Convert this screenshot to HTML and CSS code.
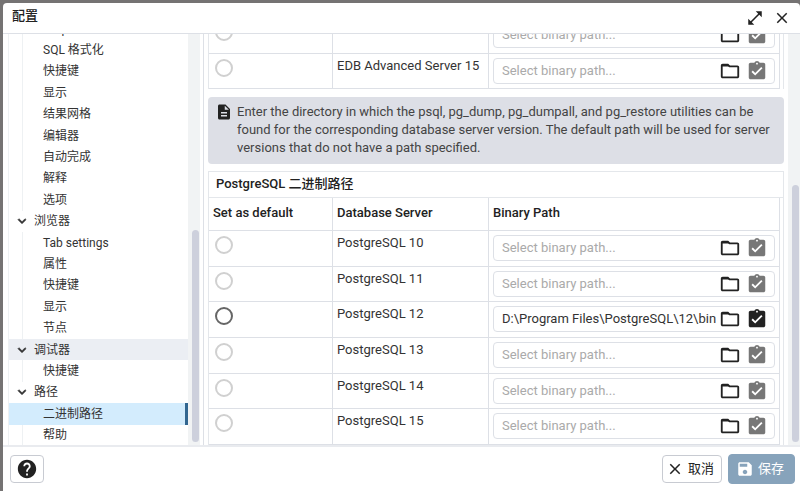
FILE: index.html
```html
<!DOCTYPE html>
<html lang="zh-CN">
<head>
  <meta charset="UTF-8">
  <title>配置</title>
  <link rel="stylesheet" href="styles.css">
</head>
<body>

<svg class="sprite" aria-hidden="true">
  <symbol id="i-folder" viewBox="0 0 24 24"><path d="M9.17 6l2 2H20v10H4V6h5.17M10 4H4c-1.1 0-1.99.9-1.99 2L2 18c0 1.1.9 2 2 2h16c1.1 0 2-.9 2-2V8c0-1.1-.9-2-2-2h-8l-2-2z"/><path d="M3 5h7l2 2H3z"/></symbol>
  <symbol id="i-check" viewBox="0 0 24 24"><path d="M19 3h-4.18C14.4 1.84 13.3 1 12 1c-1.3 0-2.4.84-2.82 2H5c-1.1 0-2 .9-2 2v14c0 1.1.9 2 2 2h14c1.1 0 2-.9 2-2V5c0-1.1-.9-2-2-2zm-7 0c.55 0 1 .45 1 1s-.45 1-1 1-1-.45-1-1 .45-1 1-1zm-2 14l-4-4 1.41-1.41L10 14.17l6.59-6.59L18 9l-8 8z"/></symbol>
  <symbol id="i-close" viewBox="0 0 24 24"><path d="M19 6.41L17.59 5 12 10.59 6.41 5 5 6.41 10.59 12 5 17.59 6.41 19 12 13.41 17.59 19 19 17.59 13.41 12z"/></symbol>
  <symbol id="i-expand" viewBox="0 0 24 24"><path d="M21 11V3h-8l3.29 3.29-10 10L3 13v8h8l-3.29-3.29 10-10z"/></symbol>
  <symbol id="i-chevron" viewBox="0 0 24 24"><path d="M7.41 8.59L12 13.17l4.59-4.58L18 10l-6 6-6-6z" stroke="currentColor"/></symbol>
  <symbol id="i-note" viewBox="0 0 24 24"><path d="M14 2H6c-1.1 0-1.99.9-1.99 2L4 20c0 1.1.89 2 1.99 2H18c1.1 0 2-.9 2-2V8l-6-6zm2 16H8v-2h8v2zm0-4H8v-2h8v2zm-3-5V3.5L18.5 9H13z"/></symbol>
  <symbol id="i-help" viewBox="0 0 24 24"><path d="M12 2C6.48 2 2 6.48 2 12s4.48 10 10 10 10-4.48 10-10S17.52 2 12 2zm1 17h-2v-2h2v2zm2.07-7.75l-.9.92C13.45 12.9 13 13.5 13 15h-2v-.5c0-1.1.45-2.1 1.17-2.83l1.24-1.26c.37-.36.59-.86.59-1.41 0-1.1-.9-2-2-2s-2 .9-2 2H8c0-2.21 1.79-4 4-4s4 1.79 4 4c0 .88-.36 1.68-.93 2.25z"/></symbol>
  <symbol id="i-save" viewBox="0 0 24 24"><path d="M17 3H5c-1.11 0-2 .9-2 2v14c0 1.1.89 2 2 2h14c1.1 0 2-.9 2-2V7l-4-4zm-5 16c-1.66 0-3-1.34-3-3s1.34-3 3-3 3 1.34 3 3-1.34 3-3 3zm3-10H5V5h10v4z"/></symbol>
</svg>

<div class="dialog">
  <header class="dialog-header">
    <h1>配置</h1>
    <button class="icon-btn" aria-label="最大化"><svg class="icon-md"><use href="#i-expand"/></svg></button>
    <button class="icon-btn" aria-label="关闭"><svg class="icon-md"><use href="#i-close"/></svg></button>
  </header>

  <div class="dialog-body">
    <aside class="sidebar">
      <ul class="tree">
        <li class="leaf">Graph Visualiser</li>
        <li class="leaf">SQL 格式化</li>
        <li class="leaf">快捷键</li>
        <li class="leaf">显示</li>
        <li class="leaf">结果网格</li>
        <li class="leaf">编辑器</li>
        <li class="leaf">自动完成</li>
        <li class="leaf">解释</li>
        <li class="leaf">选项</li>
        <li class="group"><svg class="icon-sm"><use href="#i-chevron"/></svg>浏览器</li>
        <li class="leaf">Tab settings</li>
        <li class="leaf">属性</li>
        <li class="leaf">快捷键</li>
        <li class="leaf">显示</li>
        <li class="leaf">节点</li>
        <li class="group focused"><svg class="icon-sm"><use href="#i-chevron"/></svg>调试器</li>
        <li class="leaf">快捷键</li>
        <li class="group"><svg class="icon-sm"><use href="#i-chevron"/></svg>路径</li>
        <li class="leaf selected">二进制路径</li>
        <li class="leaf">帮助</li>
      </ul>
      <div class="scrollbar"><div class="thumb thumb-tree"></div></div>
    </aside>

    <main class="content">
      <div class="panels">
        <section class="panel">
          <table class="paths paths-edb">
            <colgroup><col class="col-default"><col class="col-server"><col></colgroup>
            <tbody>
              <tr>
                <td><input type="radio" name="edb" aria-label="EDB Advanced Server 14" disabled></td>
                <td></td>
                <td><div class="path-field"><input type="text" placeholder="Select binary path..." aria-label="EDB Advanced Server 14 path"><button aria-label="Select"><svg class="icon-lg"><use href="#i-folder"/></svg></button><button aria-label="Validate" disabled><svg class="icon-lg"><use href="#i-check"/></svg></button></div></td>
              </tr>
              <tr>
                <td><input type="radio" name="edb" aria-label="EDB Advanced Server 15" disabled></td>
                <td>EDB Advanced Server 15</td>
                <td><div class="path-field"><input type="text" placeholder="Select binary path..." aria-label="EDB Advanced Server 15 path"><button aria-label="Select"><svg class="icon-lg"><use href="#i-folder"/></svg></button><button aria-label="Validate" disabled><svg class="icon-lg"><use href="#i-check"/></svg></button></div></td>
              </tr>
            </tbody>
          </table>
        </section>

        <div class="note">
          <svg class="icon-md"><use href="#i-note"/></svg>
          <p>Enter the directory in which the psql, pg_dump, pg_dumpall, and pg_restore utilities can be found for the corresponding database server version. The default path will be used for server versions that do not have a path specified.</p>
        </div>

        <section class="panel">
          <h2>PostgreSQL 二进制路径</h2>
          <table class="paths paths-pg">
            <colgroup><col class="col-default"><col class="col-server"><col></colgroup>
            <thead>
              <tr><th>Set as default</th><th>Database Server</th><th>Binary Path</th></tr>
            </thead>
            <tbody>
              <tr>
                <td><input type="radio" name="pg" aria-label="PostgreSQL 10" disabled></td>
                <td>PostgreSQL 10</td>
                <td><div class="path-field"><input type="text" placeholder="Select binary path..." aria-label="PostgreSQL 10 path"><button aria-label="Select"><svg class="icon-lg"><use href="#i-folder"/></svg></button><button aria-label="Validate" disabled><svg class="icon-lg"><use href="#i-check"/></svg></button></div></td>
              </tr>
              <tr>
                <td><input type="radio" name="pg" aria-label="PostgreSQL 11" disabled></td>
                <td>PostgreSQL 11</td>
                <td><div class="path-field"><input type="text" placeholder="Select binary path..." aria-label="PostgreSQL 11 path"><button aria-label="Select"><svg class="icon-lg"><use href="#i-folder"/></svg></button><button aria-label="Validate" disabled><svg class="icon-lg"><use href="#i-check"/></svg></button></div></td>
              </tr>
              <tr>
                <td><input type="radio" name="pg" aria-label="PostgreSQL 12"></td>
                <td>PostgreSQL 12</td>
                <td><div class="path-field"><input type="text" value="D:\Program Files\PostgreSQL\12\bin" aria-label="PostgreSQL 12 path"><button aria-label="Select"><svg class="icon-lg"><use href="#i-folder"/></svg></button><button aria-label="Validate"><svg class="icon-lg"><use href="#i-check"/></svg></button></div></td>
              </tr>
              <tr>
                <td><input type="radio" name="pg" aria-label="PostgreSQL 13" disabled></td>
                <td>PostgreSQL 13</td>
                <td><div class="path-field"><input type="text" placeholder="Select binary path..." aria-label="PostgreSQL 13 path"><button aria-label="Select"><svg class="icon-lg"><use href="#i-folder"/></svg></button><button aria-label="Validate" disabled><svg class="icon-lg"><use href="#i-check"/></svg></button></div></td>
              </tr>
              <tr>
                <td><input type="radio" name="pg" aria-label="PostgreSQL 14" disabled></td>
                <td>PostgreSQL 14</td>
                <td><div class="path-field"><input type="text" placeholder="Select binary path..." aria-label="PostgreSQL 14 path"><button aria-label="Select"><svg class="icon-lg"><use href="#i-folder"/></svg></button><button aria-label="Validate" disabled><svg class="icon-lg"><use href="#i-check"/></svg></button></div></td>
              </tr>
              <tr>
                <td><input type="radio" name="pg" aria-label="PostgreSQL 15" disabled></td>
                <td>PostgreSQL 15</td>
                <td><div class="path-field"><input type="text" placeholder="Select binary path..." aria-label="PostgreSQL 15 path"><button aria-label="Select"><svg class="icon-lg"><use href="#i-folder"/></svg></button><button aria-label="Validate" disabled><svg class="icon-lg"><use href="#i-check"/></svg></button></div></td>
              </tr>
            </tbody>
          </table>
        </section>
      </div>
      <div class="scrollbar"><div class="thumb thumb-main"></div></div>
    </main>
  </div>

  <footer class="dialog-footer">
    <button class="btn btn-help" aria-label="帮助"><svg class="icon-lg"><use href="#i-help"/></svg></button>
    <button class="btn"><svg class="icon-md"><use href="#i-close"/></svg>取消</button>
    <button class="btn btn-primary" disabled><svg class="icon-md"><use href="#i-save"/></svg>保存</button>
  </footer>
</div>

</body>
</html>
```

FILE: styles.css
```css
* {
  box-sizing: border-box;
}

body {
  margin: 0;
  height: 100vh;
  padding: 3px 0 0 3px;
  overflow: hidden;
  background: #757373;
  color: #222;
  font: 13px/18px Roboto, "Noto Sans CJK SC", sans-serif;
}

.sprite {
  display: none;
}

svg {
  display: block;
  flex: none;
  fill: currentColor;
}

.icon-sm {
  width: 16px;
  height: 16px;
}

.icon-md {
  width: 18px;
  height: 18px;
}

.icon-lg {
  width: 22px;
  height: 22px;
}

button,
input {
  font: inherit;
  color: inherit;
}

button {
  padding: 0;
  border: none;
  background: none;
  cursor: pointer;
}

.dialog {
  display: flex;
  flex-direction: column;
  height: 100%;
  background: #fff;
  border-radius: 4px 4px 0 0;
}

/* header */
.dialog-header {
  display: flex;
  align-items: center;
  gap: 9px;
  height: 31px;
  padding: 0 9px;
  border-bottom: 1px solid #dde0e6;
}

.dialog-header h1 {
  flex: 1;
  margin: 0;
  padding-bottom: 4px;
  font-size: 13px;
  font-weight: 500;
}

/* body */
.dialog-body {
  flex: 1;
  display: flex;
  min-height: 0;
}

.sidebar {
  flex: 0 0 201px;
  display: flex;
  padding: 0 3px 0 5px;
  border-right: 1px solid #dde0e6;
  overflow: hidden;
}

.tree {
  flex: 1;
  align-self: flex-end;
  display: grid;
  grid-auto-rows: 1fr;
  height: calc(100% + 17px);
  margin: 0 0 -1px;
  padding: 0;
  list-style: none;
  border-left: 1px solid #eef1f3;
  color: #333;
  font-size: 12px;
}

.tree li {
  display: flex;
  align-items: center;
  min-height: 0;
}

.leaf {
  margin-left: 13px;
  padding-left: 20px;
  border-left: 1px solid #eef1f3;
}

.group {
  gap: 4px;
  padding-left: 5px;
}

.focused {
  background: #ebeef3;
}

.tree .selected {
  margin-left: 0;
  padding-left: 34px;
  border-left: none;
  border-right: 3px solid #326690;
  background: #d3ecfd;
}

.scrollbar {
  display: flex;
  flex-direction: column;
  justify-content: flex-end;
  flex: 0 0 12px;
  padding: 0 1px 3px 4px;
  background: #f1f3f4;
}

.thumb {
  border-radius: 4px;
  background: #cdd0dc;
}

.thumb-tree {
  height: 52%;
}

.thumb-main {
  height: 63%;
}

/* content */
.content {
  flex: 1;
  display: flex;
  min-width: 0;
  padding-left: 4px;
}

.panels {
  flex: 1;
  display: flex;
  flex-direction: column;
  justify-content: flex-end;
  min-width: 0;
  margin-right: 4px;
  overflow: hidden;
}

.panel {
  flex: none;
  padding-right: 3px;
  border: 1px solid #e4e7eb;
  border-bottom: none;
}

.panel h2 {
  height: 26px;
  margin: 0 -3px 0 0;
  padding: 3px 7px;
  border-bottom: 1px solid #e4e7eb;
  font-size: 13px;
  font-weight: 500;
}

.paths {
  width: 100%;
  table-layout: fixed;
  border-spacing: 0;
}

.paths-edb {
  height: 71px;
}

.paths-pg {
  height: 247px;
}

.col-default {
  width: 124px;
}

.col-server {
  width: 156px;
}

.paths th,
.paths td {
  padding: 3px 4px 4px;
  border-right: 1px solid #dde0e6;
  border-bottom: 1px solid #dde0e6;
  text-align: left;
  vertical-align: top;
}

.paths td {
  color: #333;
}

.paths th {
  height: 33px;
  padding: 6px 4px;
  font-weight: 500;
}

.paths input[type="radio"] {
  appearance: none;
  display: block;
  width: 18px;
  height: 18px;
  margin: 2px;
  border: 2px solid #666;
  border-radius: 50%;
}

.paths input[type="radio"]:disabled {
  border-color: #d0d0d0;
}

.path-field {
  display: flex;
  align-items: center;
  height: 26px;
  margin-top: 1px;
  padding: 0 6px 0 8px;
  border: 1px solid #dde0e6;
  border-radius: 4px;
}

.path-field input {
  flex: 1;
  min-width: 0;
  padding: 0;
  border: none;
  outline: none;
  background: none;
}

.path-field input::placeholder {
  color: #aaa;
}

.path-field button {
  color: #222;
}

.path-field button:disabled {
  margin-left: 5px;
  color: #777;
}

.path-field button:last-child {
  margin-left: 5px;
}

.note {
  flex: none;
  display: flex;
  gap: 4px;
  margin: 8px 0 7px;
  padding: 6px 7px 7px;
  border-radius: 4px;
  background: #dddfe6;
  color: #444;
}

.note svg {
  color: #222;
}

.note p {
  margin: 0;
}

/* footer */
.dialog-footer {
  display: flex;
  align-items: center;
  gap: 6px;
  height: 46px;
  padding: 0 5px 0 7px;
  border-top: 2px solid #e9ebef;
}

.btn {
  display: flex;
  align-items: center;
  gap: 4px;
  height: 28px;
  padding: 0 7px 0 3px;
  border: 1px solid #c8cbd2;
  border-radius: 4px;
}

.btn-help {
  margin-right: auto;
  padding: 0 5px;
}

.btn-primary {
  height: 30px;
  padding: 0 10px 0 7px;
  border-color: #87a3bb;
  background: #87a3bb;
  color: #fff;
}
```
